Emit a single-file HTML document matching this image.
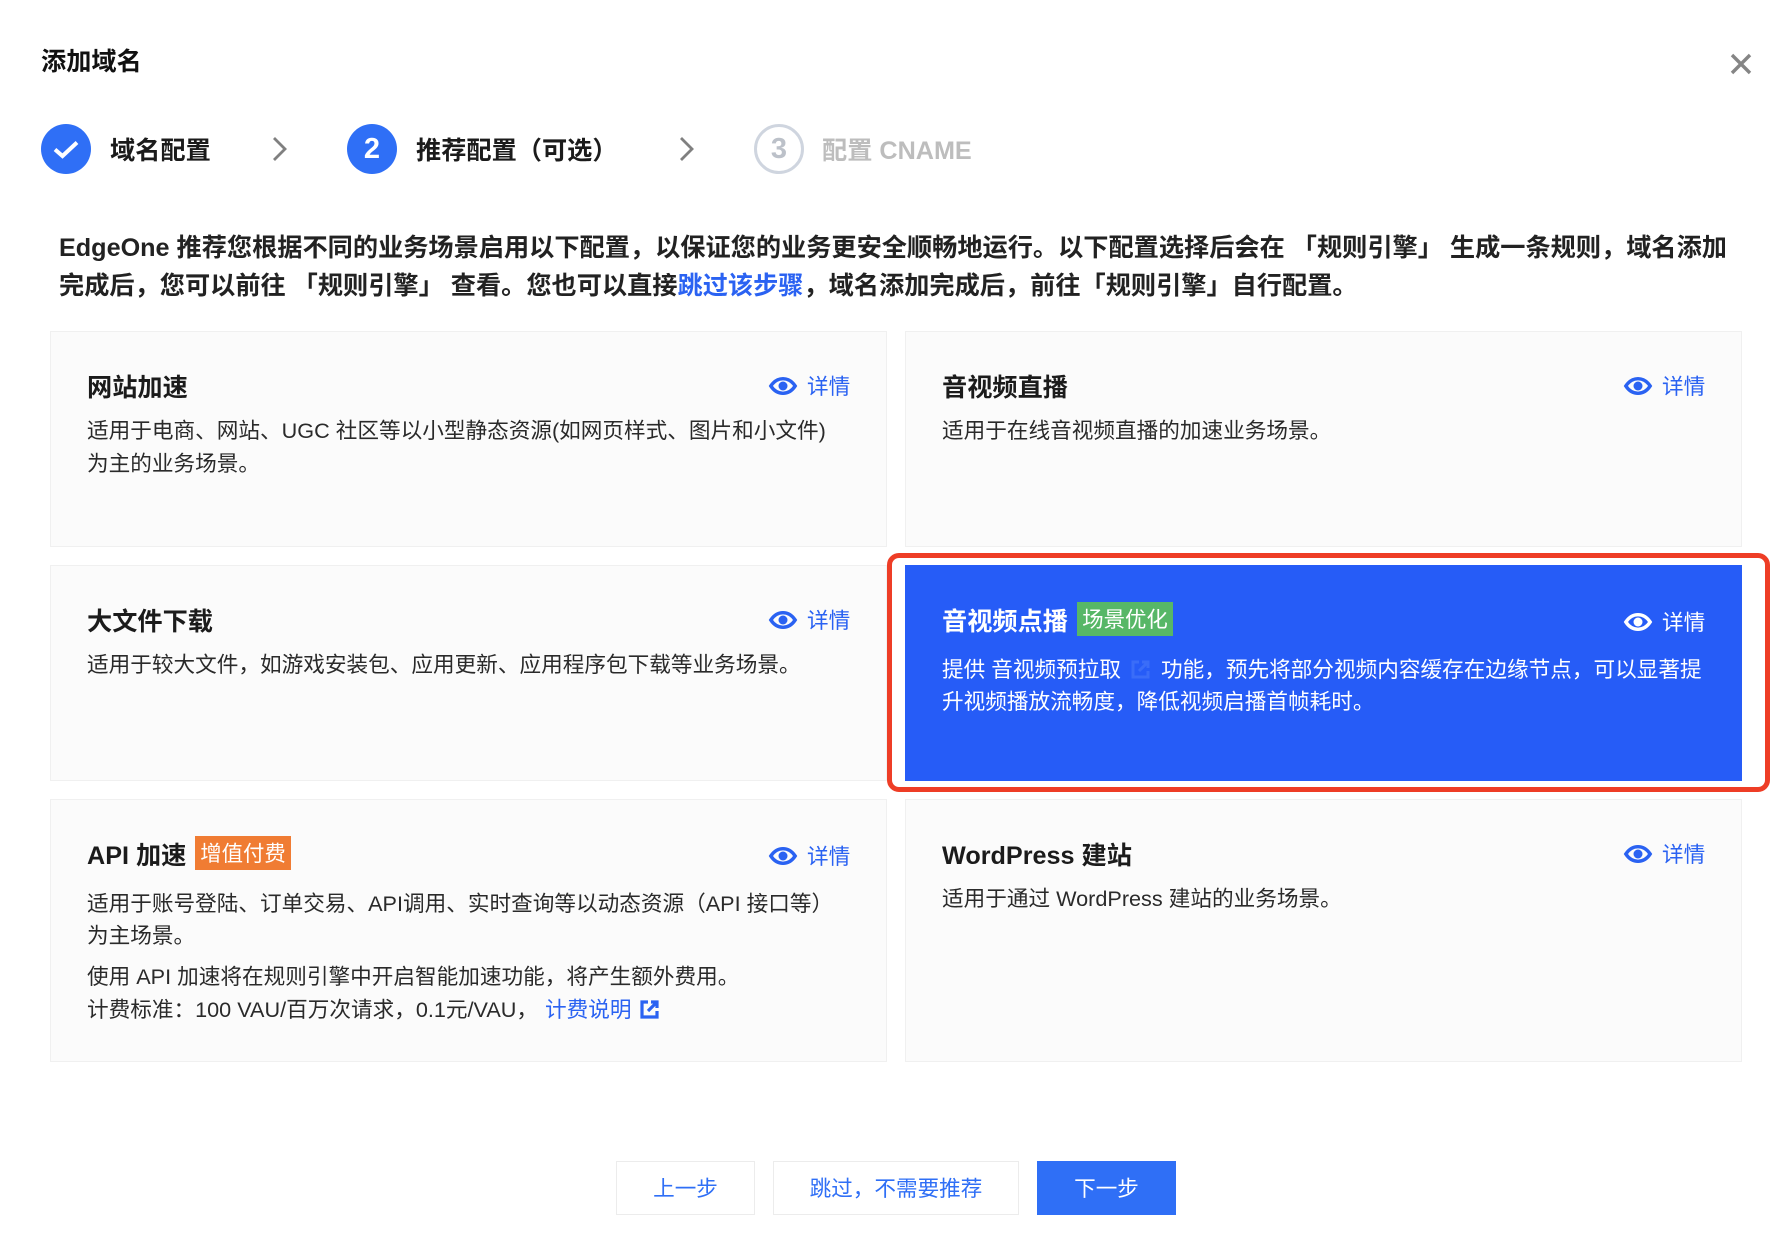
<!DOCTYPE html>
<html lang="zh"><head><meta charset="utf-8"><title>添加域名</title>
<style>
html,body{margin:0;padding:0;background:#fff}
#p{position:relative;width:1792px;height:1256px;overflow:hidden;background:#fff;font-family:"Liberation Sans","Noto Sans CJK SC",sans-serif;color:#111}
.t{position:absolute;white-space:pre;line-height:40px;height:40px;transform:translateY(-19px)}
.b{font-weight:700}
.h{font-size:25.2px;font-weight:700;color:#1b1b1b}
.d{font-size:21.63px;color:#2a2a2a}
.w{color:#fff}
.l{color:#2a62f2}
.card{position:absolute;box-sizing:border-box;background:#fbfbfb;border:1.5px solid #f0f0f0}
.tag{position:absolute;color:#fff;font-size:21.4px;line-height:36px;height:34px;text-align:center;white-space:pre}
svg{position:absolute;overflow:visible}
.btn{position:absolute;box-sizing:border-box;top:1161px;height:54px;line-height:53px;text-align:center;font-size:21.6px;color:#2f6ff6;border:1.5px solid #ececec;background:#fff;white-space:pre}
.c{position:absolute;box-sizing:border-box;width:50px;height:50px;border-radius:50%;top:124px;background:#2f6ff6;color:#fff;text-align:center;font-size:29px;font-weight:700;line-height:50px}
</style></head><body><div id="p">
<svg width="0" height="0" style="left:0;top:0"><defs><symbol id="eye" viewBox="0 0 28 18" overflow="visible"><path d="M1.8 9C5 4.2 9 1.700 14 1.700S23 4.200 26.200 9C23 13.800 19 16.300 14 16.300S5 13.800 1.800 9Z" stroke="currentColor" stroke-width="3.400" stroke-linejoin="miter" fill="none"/><circle cx="14" cy="9" r="4.500" fill="currentColor"/></symbol></defs></svg>
<div class="t b" style="left:41px;top:61px;font-size:25.200px">添加域名</div>
<svg style="left:1730px;top:53px" width="22" height="22" viewBox="0 0 22 22"><path d="M2 2L20 20M20 2L2 20" stroke="#858585" stroke-width="3.400" fill="none"/></svg>

<div class="c" style="left:41px"></div>
<svg style="left:53px;top:140px" width="26" height="19" viewBox="0 0 26 19"><path d="M2 9.500L9.500 16L24 2.500" stroke="#fff" stroke-width="4" fill="none"/></svg>
<div class="t h" style="left:110px;top:150px">域名配置</div>
<svg style="left:272px;top:136px" width="16" height="26" viewBox="0 0 16 26"><path d="M2 2L13 13L2 24" stroke="#808080" stroke-width="2.800" fill="none"/></svg>
<div class="c" style="left:347px">2</div>
<div class="t h" style="left:416px;top:150px">推荐配置（可选）</div>
<svg style="left:679px;top:136px" width="16" height="26" viewBox="0 0 16 26"><path d="M2 2L13 13L2 24" stroke="#808080" stroke-width="2.800" fill="none"/></svg>
<div class="c" style="left:754px;background:#fff;border:3px solid #cfd5df;color:#bcc1c9;line-height:44px">3</div>
<div class="t h" style="left:822px;top:150px;color:#bdbdbd">配置 CNAME</div>

<div class="t b" style="left:59px;top:247px;font-size:25.200px;color:#222">EdgeOne 推荐您根据不同的业务场景启用以下配置，以保证您的业务更安全顺畅地运行。以下配置选择后会在 「规则引擎」 生成一条规则，域名添加</div>
<div class="t b" style="left:59px;top:285px;font-size:25.200px;color:#222">完成后，您可以前往 「规则引擎」 查看。您也可以直接<span class="l">跳过该步骤</span>，域名添加完成后，前往「规则引擎」自行配置。</div>

<div class="card" style="left:50px;top:331px;width:837px;height:216px"></div>
<div class="card" style="left:905px;top:331px;width:837px;height:216px"></div>
<div class="card" style="left:50px;top:565px;width:837px;height:216px"></div>
<div class="card" style="left:50px;top:799px;width:837px;height:263px"></div>
<div class="card" style="left:905px;top:799px;width:837px;height:263px"></div>

<div style="position:absolute;box-sizing:border-box;left:887px;top:553px;width:883px;height:239px;border:5px solid #ee3d26;border-radius:12px;background:#fff"></div>
<div style="position:absolute;left:905px;top:565px;width:837px;height:216px;background:#265cf7"></div>

<div class="t h" style="left:87px;top:387px">网站加速</div>
<div class="t d" style="left:87px;top:430px">适用于电商、网站、UGC 社区等以小型静态资源(如网页样式、图片和小文件)</div>
<div class="t d" style="left:87px;top:463px">为主的业务场景。</div>

<div class="t h" style="left:942px;top:387px">音视频直播</div>
<div class="t d" style="left:942px;top:430px">适用于在线音视频直播的加速业务场景。</div>

<div class="t h" style="left:87px;top:621px">大文件下载</div>
<div class="t d" style="left:87px;top:664px">适用于较大文件，如游戏安装包、应用更新、应用程序包下载等业务场景。</div>

<div class="t h w" style="left:942px;top:621px">音视频点播</div>
<div class="tag" style="left:1077px;top:602px;width:96px;background:#57b767">场景优化</div>
<div class="t d w" style="left:942px;top:669px">提供 音视频预拉取</div>
<svg style="left:1131px;top:660px" width="19" height="19" viewBox="0 0 19 19"><path d="M8 2H2V17H17V11M11 2H17V8M17 2L8 11" stroke="#3a6df8" stroke-width="3" fill="none"/></svg>
<div class="t d w" style="left:1161px;top:669px">功能，预先将部分视频内容缓存在边缘节点，可以显著提</div>
<div class="t d w" style="left:942px;top:701px">升视频播放流畅度，降低视频启播首帧耗时。</div>

<div class="t h" style="left:87px;top:855px">API 加速</div>
<div class="tag" style="left:195px;top:836px;width:96px;background:#f07c33">增值付费</div>
<div class="t d" style="left:87px;top:903px">适用于账号登陆、订单交易、API调用、实时查询等以动态资源（API 接口等）</div>
<div class="t d" style="left:87px;top:935px">为主场景。</div>
<div class="t d" style="left:87px;top:976px">使用 API 加速将在规则引擎中开启智能加速功能，将产生额外费用。</div>
<div class="t d" style="left:87px;top:1009px">计费标准：100 VAU/百万次请求，0.1元/VAU，</div>
<div class="t d l" style="left:545px;top:1009px">计费说明</div>
<svg style="left:640px;top:1000px" width="19" height="19" viewBox="0 0 19 19"><path d="M8 2H2V17H17V11M11 2H17V8M17 2L8 11" stroke="#2a62f2" stroke-width="3.200" fill="none"/></svg>

<div class="t h" style="left:942px;top:855px">WordPress 建站</div>
<div class="t d" style="left:942px;top:898px">适用于通过 WordPress 建站的业务场景。</div>

<svg class="l" style="left:769px;top:377px" width="28" height="18"><use href="#eye"/></svg>
<div class="t d l" style="left:807px;top:386px">详情</div>
<svg class="l" style="left:1624px;top:377px" width="28" height="18"><use href="#eye"/></svg>
<div class="t d l" style="left:1662px;top:386px">详情</div>
<svg class="l" style="left:769px;top:611px" width="28" height="18"><use href="#eye"/></svg>
<div class="t d l" style="left:807px;top:620px">详情</div>
<svg class="w" style="left:1624px;top:613px" width="28" height="18"><use href="#eye"/></svg>
<div class="t d w" style="left:1662px;top:622px">详情</div>
<svg class="l" style="left:769px;top:847px" width="28" height="18"><use href="#eye"/></svg>
<div class="t d l" style="left:807px;top:856px">详情</div>
<svg class="l" style="left:1624px;top:845px" width="28" height="18"><use href="#eye"/></svg>
<div class="t d l" style="left:1662px;top:854px">详情</div>

<div class="btn" style="left:616px;width:139px">上一步</div>
<div class="btn" style="left:773px;width:246px">跳过，不需要推荐</div>
<div class="btn" style="left:1037px;width:139px;background:#2f6ff6;border-color:#2f6ff6;color:#fff">下一步</div>
</div></body></html>
